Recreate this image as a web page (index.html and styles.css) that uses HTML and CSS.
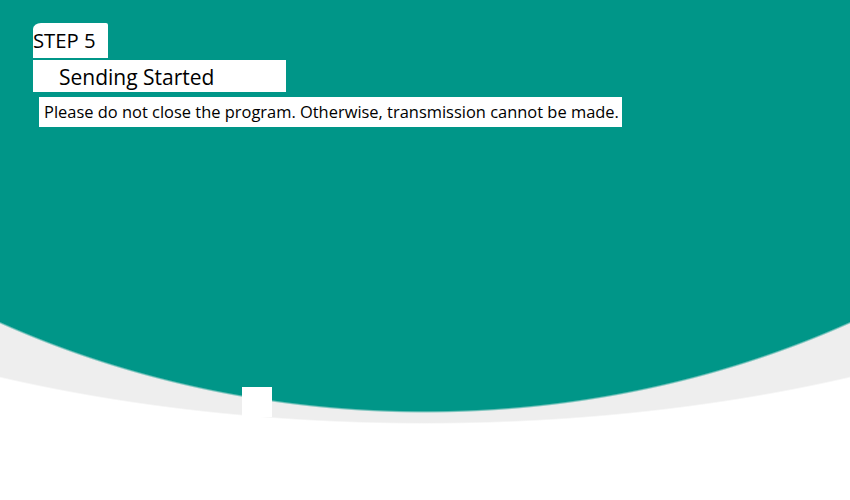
FILE: index.html
```html
<!DOCTYPE html>
<html>
<head>
<meta charset="utf-8">
<link rel="stylesheet" href="styles.css">
</head>
<body>
<main class="screen">
  <header class="head">
    <div class="step">STEP 5</div>
    <div class="title">Sending Started</div>
    <div class="notice">Please do not close the program. Otherwise, transmission cannot be made.</div>
  </header>
  <div class="spacer"></div>
  <div class="footer-row"><span class="square"></span></div>
</main>
</body>
</html>
```

FILE: styles.css
```css
html, body {
  margin: 0;
  padding: 0;
}
body {
  width: 850px;
  height: 500px;
  overflow: hidden;
  font-family: "Open Sans", "Noto Sans", sans-serif;
  color: #000;
  background:
    radial-gradient(900px 751px at 425px -338px, #009688 99.7%, rgba(0,150,136,0) 100%),
    radial-gradient(900px 388px at 425px 36px, #eeeeee 99.6%, rgba(238,238,238,0) 100%),
    #ffffff;
}
.screen {
  display: flex;
  flex-direction: column;
  height: 500px;
}
.head {
  display: flex;
  flex-direction: column;
  align-items: flex-start;
  padding: 23px 0 0 33px;
}
.step {
  background: #fff;
  font-size: 20.3px;
  line-height: 34px;
  height: 35px;
  padding: 0 12px 0 0;
  border-top-left-radius: 8px 6px;
  border-top-right-radius: 2px;
}
.title {
  background: #fff;
  font-size: 21px;
  line-height: 30px;
  width: 227px;
  padding: 2px 0 0 26px;
  margin-top: 2px;
}
.notice {
  background: #fff;
  font-size: 16.45px;
  line-height: 30px;
  padding: 0 3px 0 5px;
  margin: 5px 0 0 6px;
}
.spacer {
  flex: 1;
}
.footer-row {
  display: flex;
  padding: 0 0 83px 242px;
}
.square {
  width: 30px;
  height: 30px;
  background: #fff;
}
```
